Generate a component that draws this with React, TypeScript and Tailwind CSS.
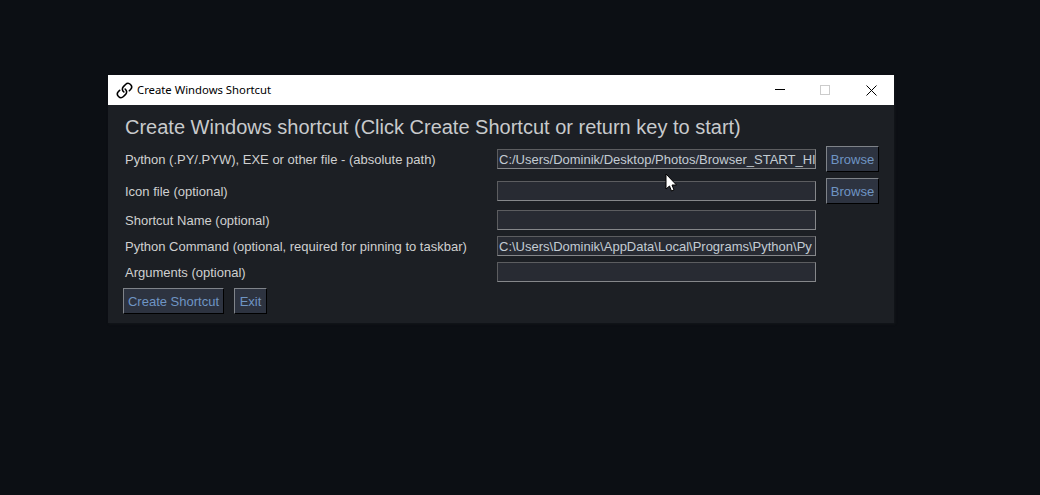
import { Link } from "lucide-react";

const labelClass = "h-5 w-[374px] pl-[2px] text-[13px] leading-[22px] text-[#cfd0d0] whitespace-nowrap";
const inputClass =
  "h-5 w-[319px] overflow-hidden whitespace-nowrap border border-t-[#5c5d60] border-l-[#5c5d60] border-r-[#85878a] border-b-[#85878a] bg-[#282b33] pl-[1px] text-[13px] leading-[20px] text-[#c3ccd3]";
const buttonClass =
  "h-[26px] border border-t-[#7f8389] border-l-[#7f8389] border-r-black border-b-black bg-[#2d3340] pt-[1px] text-[13px] text-[#6f95c4]";

const Row = ({ label, value, browse }: { label: string; value?: string; browse?: boolean }) => (
  <div className="flex items-center">
    <div className={labelClass}>{label}</div>
    <div className={inputClass}>{value}</div>
    {browse && <button className={`${buttonClass} ml-[10px] w-[53px]`}>Browse</button>}
  </div>
);

const App: React.FC = () => {
  return (
    <div className="relative h-[495px] w-[1040px] overflow-hidden bg-[#0c0f14] pl-[108px] pt-[75px] font-['Liberation_Sans',sans-serif]">
      <div className="w-[786px] bg-[#1c1f24] shadow-[1px_1px_2px_#14171b]">
        <div className="flex h-[30px] items-center bg-white pl-[8px] text-black">
          <Link size={17} strokeWidth={2.2} className="-scale-x-100 rotate-90" />
          <span className="ml-[4px] font-['Noto_Sans',sans-serif] text-[11.3px]">Create Windows Shortcut</span>
          <div className="ml-auto flex items-center">
            <svg width="10" height="10" viewBox="0 0 10 10" className="mr-[35px]">
              <path d="M0 4.5 H10" stroke="black" strokeWidth="1" />
            </svg>
            <svg width="10" height="10" viewBox="0 0 10 10" className="mr-[36px]">
              <rect x="0.5" y="0.5" width="9" height="9" fill="none" stroke="#cccccc" strokeWidth="1" />
            </svg>
            <svg width="11" height="11" viewBox="0 0 11 11" className="mr-[17px]">
              <path d="M0.5 0.5 L10.5 10.5 M10.5 0.5 L0.5 10.5" stroke="black" strokeWidth="1" />
            </svg>
          </div>
        </div>
        <div className="flex flex-col gap-[6px] pb-[9px] pl-[15px] pt-[10px]">
          <div className="h-[25px] pl-[2px] text-[20px] leading-[25px] text-[#c8cacc] whitespace-nowrap">
            Create Windows shortcut (Click Create Shortcut or return key to start)
          </div>
          <Row
            label="Python (.PY/.PYW), EXE or other file - (absolute path)"
            value="C:/Users/Dominik/Desktop/Photos/Browser_START_HI"
            browse
          />
          <Row label="Icon file (optional)" browse />
          <Row label="Shortcut Name (optional)" />
          <Row
            label="Python Command (optional, required for pinning to taskbar)"
            value="C:\Users\Dominik\AppData\Local\Programs\Python\Py"
          />
          <Row label="Arguments (optional)" />
          <div className="flex">
            <button className={`${buttonClass} w-[101px]`}>Create Shortcut</button>
            <button className={`${buttonClass} ml-[10px] w-[33px]`}>Exit</button>
          </div>
        </div>
      </div>
      <svg className="absolute left-[665px] top-[173px]" width="13" height="19" viewBox="0 0 13 19">
        <path d="M1 1 L1 16 L4.5 13 L6.5 18 L9 17 L7 12 L11.5 12 Z" fill="white" stroke="black" strokeWidth="1" />
      </svg>
    </div>
  );
};

export default App;
